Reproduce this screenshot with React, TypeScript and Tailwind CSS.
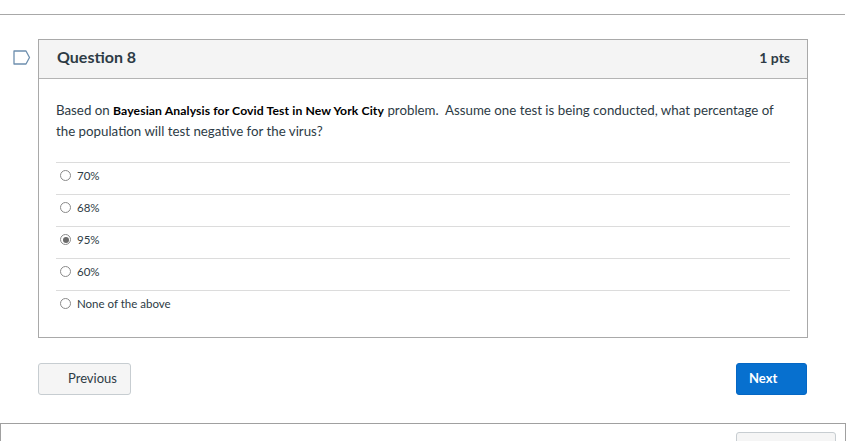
const answers = [
  { label: "70%", checked: false },
  { label: "68%", checked: false },
  { label: "95%", checked: true },
  { label: "60%", checked: false },
  { label: "None of the above", checked: false },
];

function Radio({ checked }: { checked: boolean }) {
  return (
    <span className="mt-[2px] flex h-[11px] w-[11px] shrink-0 items-center justify-center rounded-full border border-[#8a8a8a] bg-white">
      {checked && <span className="h-[6px] w-[6px] rounded-full bg-[#6b6b6b]" />}
    </span>
  );
}

export default function App() {
  return (
    <div
      className="h-[441px] w-[865px] overflow-hidden bg-white text-[#2d3b45]"
      style={{ fontFamily: "Lato, 'Open Sans', sans-serif" }}
    >
      <div className="pt-[14px]">
        <div className="w-[845px] border-t border-[#a8a8a8]" />
      </div>

      <div className="mt-[24px] flex">
        <div className="w-[38px] shrink-0 pl-[13px] pt-[11px]">
          <svg width="18" height="15" viewBox="0 0 18 15">
            <path d="M1 1 H13 L16.5 7.5 L13 14 H1 Z" fill="none" stroke="#6e8fae" strokeWidth="1.3" strokeLinejoin="round" />
          </svg>
        </div>

        <div className="w-[770px] border border-[#a9a9a9]">
          <div className="flex h-[39px] items-center justify-between border-b border-[#b4b4b4] bg-[#f4f4f4] pb-[4px] pl-[18px] pr-[17px]">
            <span className="text-[16px] font-bold">Question 8</span>
            <span className="text-[14px] font-bold">1 pts</span>
          </div>

          <div className="px-[17px] pb-[15px] pt-[21px]">
            <p className="pr-[10px] text-[13.3px] leading-[21px]">
              Based on <strong className="text-[12.2px] font-bold tracking-[0.1px] text-black">Bayesian Analysis for Covid Test in New York City</strong> problem.&nbsp; Assume one test is being conducted, what percentage of the population will test negative for the virus?
            </p>

            <div className="mt-[20px]">
              {answers.map((a) => (
                <div key={a.label} className="flex h-[32px] items-start gap-[6px] border-t border-[#dcdcdc] pl-[4px] pt-[5px] text-[11.5px] leading-[15px]">
                  <Radio checked={a.checked} />
                  <span>{a.label}</span>
                </div>
              ))}
            </div>
          </div>
        </div>
      </div>

      <div className="ml-[38px] mt-[25px] flex w-[769px] items-center justify-between">
        <button className="h-[32px] w-[93px] rounded-[3px] border border-[#c7cdd1] bg-[#f5f5f5] pl-[29px] text-left text-[13px] text-[#2d3b45]">
          Previous
        </button>
        <button className="h-[32px] w-[71px] rounded-[3px] border border-[#0567c4] bg-[#0770cf] pl-[12px] text-left text-[13px] font-bold text-white">
          Next
        </button>
      </div>

      <div className="mt-[28px] flex h-[40px] w-[846px] justify-end border-x border-t border-[#a0a0a0] pr-[9px] pt-[8px]">
        <div className="h-[30px] w-[100px] rounded-[3px] border border-[#c7cdd1] bg-[#f5f5f5]" />
      </div>
    </div>
  );
}
